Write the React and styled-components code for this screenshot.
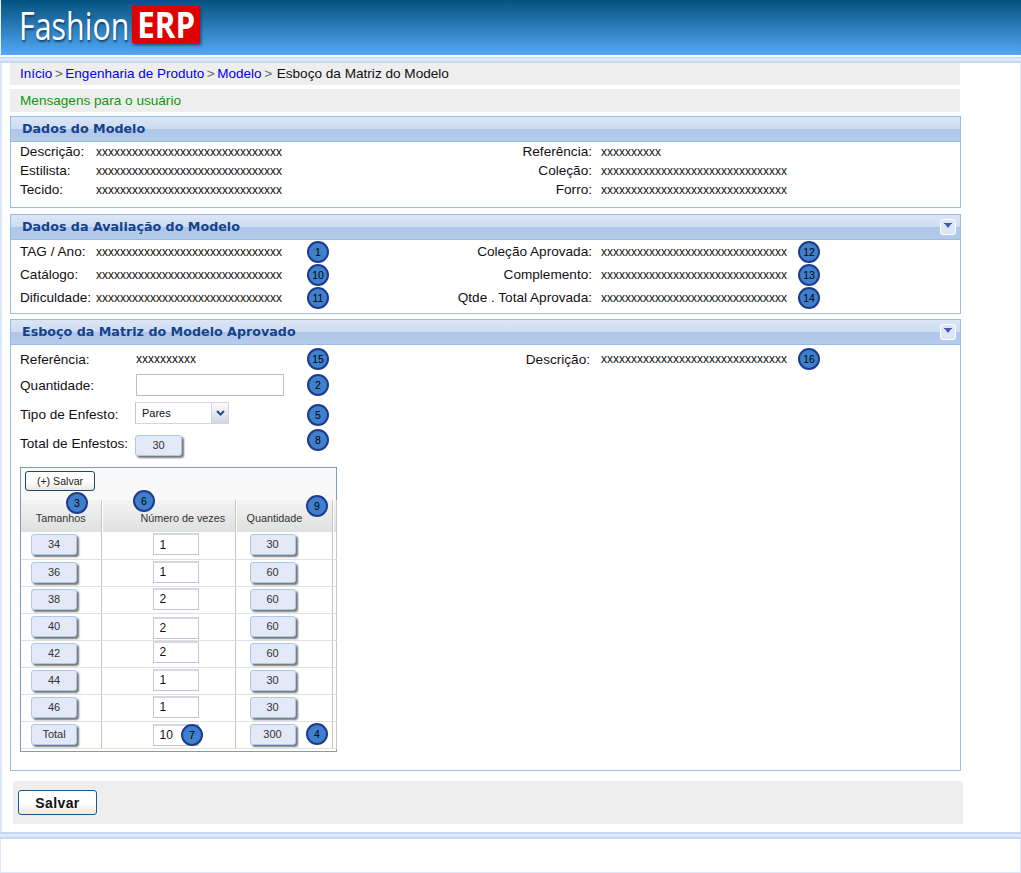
import React from 'react';
import styled, { createGlobalStyle } from 'styled-components';

const Global = createGlobalStyle`
  html, body { margin: 0; padding: 0; background: #fff; }
  body { font-family: "Liberation Sans", Arial, sans-serif; font-size: 13.6px; color: #111; }
`;

const Page = styled.div`
  width: 1021px;
  height: 873px;
  overflow: hidden;
  display: flex;
  flex-direction: column;
`;

const Header = styled.header`
  height: 55px;
  flex: none;
  box-sizing: border-box;
  padding: 6px 0 0 18px;
  display: flex;
  align-items: flex-start;
  gap: 4px;
  background: linear-gradient(#04527f, #52a8f5);
  border-left: 1px solid #e8f1fb;
`;

const LogoName = styled.span`
  display: block;
  width: 109px;
  font-family: "Open Sans", sans-serif;
  font-size: 38px;
  line-height: 38px;
  color: #fff;
  text-shadow: 1px 2px 2px #16456f;
  transform: scaleX(.8);
  transform-origin: left top;
`;

const LogoBox = styled.span`
  display: flex;
  justify-content: center;
  width: 68px;
  height: 37px;
  background: #e00000;
  box-shadow: 1px 2px 3px #16456f;
`;

const LogoMark = styled.span`
  display: block;
  color: #fff;
  font-family: "Open Sans", sans-serif;
  font-weight: 700;
  font-size: 36px;
  line-height: 37px;
  transform: scaleX(.87);
`;

const TopBand = styled.div`
  height: 3px;
  margin-top: 2px;
  flex: none;
  background: #dfe8f8;
  border-top: 1px solid #c6d7f1;
  border-bottom: 2px solid #c6d7f1;
`;

const Body = styled.main`
  flex: 1;
  box-sizing: border-box;
  border-left: 2px solid #dce7f8;
  border-right: 1px solid #dce7f8;
  padding: 0 0 0 8px;
  display: flex;
  flex-direction: column;
`;

const GreyBar = styled.div`
  width: 950px;
  box-sizing: border-box;
  background: #eeeeee;
  height: ${p => p.$h}px;
  line-height: ${p => p.$h}px;
  padding-left: 10px;
  margin-bottom: 4px;
  color: ${p => p.$color || '#111'};
`;

const Crumbs = styled(GreyBar)`
  font-size: 13.5px;
`;

const Crumb = styled.a`
  color: #0000ee;
`;

const Sep = styled.span`
  color: #666;
  margin: 0 2.6px;
`;

const CurrentCrumb = styled.span`
  font-size: 13.6px;
  margin-left: 2px;
`;

const Panel = styled.section`
  width: 951px;
  box-sizing: border-box;
  border: 1px solid #99bbe8;
  margin-bottom: ${p => p.$mb}px;
  height: ${p => p.$h}px;
`;

const PanelHead = styled.div`
  height: 25px;
  box-sizing: border-box;
  border-bottom: 1px solid #99bbe8;
  background: linear-gradient(#dbe6f5 0, #cddcf1 49%, #aec6e9 52%, #b5cbea 100%);
  display: flex;
  align-items: center;
  justify-content: space-between;
  padding: 0 4px 1px 11px;
`;

const PanelTitle = styled.h2`
  margin: 0 0 1px;
  font-family: "DejaVu Sans", sans-serif;
  font-size: 12.7px;
  font-weight: 700;
  color: #15428b;
`;

const Collapse = styled.span`
  width: 14px;
  height: 14px;
  border: 1px solid #fff;
  border-radius: 3px;
  background: #dce6f8;
  display: flex;
  align-items: center;
  justify-content: center;
`;

const Fields = styled.div`
  display: grid;
  grid-template-columns: ${p => p.$first}px ${p => 287 - p.$first}px 22px 272px 197px 22px;
  padding: ${p => p.$pt}px 0 0 9px;
  grid-auto-rows: ${p => p.$row}px;
  align-items: center;
`;

const Label = styled.span`
  white-space: nowrap;
  padding-top: ${p => p.$pt || 0}px;
`;

const RightLabel = styled(Label)`
  text-align: right;
  padding-right: ${p => p.$pr || 9}px;
`;

const Mock = styled.span`
  font-size: 12px;
  white-space: nowrap;
`;

const Badge = styled.span`
  width: 22px;
  height: 22px;
  box-sizing: border-box;
  margin-top: ${p => p.$mt || 0}px;
  border: 2px solid #1f3a8c;
  border-radius: 50%;
  background: #3f80cc;
  color: #000;
  font-size: 10.5px;
  line-height: 18px;
  text-align: center;
  display: block;
`;

const FloatBadge = styled(Badge)`
  position: absolute;
  left: ${p => p.$x}px;
  top: ${p => p.$y}px;
`;

const FormStack = styled.div`
  padding-left: 9px;
`;

const FormRow = styled.div`
  display: grid;
  grid-template-columns: 116px 171px 22px;
  align-items: ${p => p.$align || 'center'};
  height: ${p => p.$h}px;
`;

const TextInput = styled.input`
  width: 148px;
  height: 22px;
  box-sizing: border-box;
  border: 1px solid #b9bdd4;
  background: #fff;
  padding: 0;
`;

const Select = styled.div`
  width: 94px;
  height: 22px;
  box-sizing: border-box;
  margin-left: -1px;
  border: 1px solid #d4d6e4;
  border-left-color: #c2c4d6;
  display: flex;
  justify-content: space-between;
  align-items: stretch;
  font-size: 11px;
  padding-left: 6px;
  line-height: 20px;
`;

const SelectArrow = styled.span`
  width: 16px;
  background: linear-gradient(#fbfcfe, #d3d6e2);
  border-left: 1px solid #d0d2de;
  display: flex;
  align-items: center;
  justify-content: center;
`;

const ValueBtn = styled.span`
  display: block;
  width: ${p => p.$w || 46}px;
  height: 21px;
  box-sizing: border-box;
  margin: ${p => p.$mt || 0}px 0 0 ${p => p.$ml || 0}px;
  border: 1px solid #a9c8f0;
  border-radius: 3px;
  background: #e3e9f7;
  box-shadow: 2px 2px 2px #777;
  font-size: 11px;
  line-height: 19px;
  text-align: center;
  color: #333;
`;

const TableBox = styled.div`
  position: relative;
  width: 317px;
  height: 285px;
  box-sizing: border-box;
  border: 1px solid #7f9db9;
  margin: 16px 0 0 9px;
  background: #fff;
`;

const TableBar = styled.div`
  height: 32px;
  box-sizing: border-box;
  padding: 3px 0 0 4px;
  background: #f9f9f9;
`;

const SmallButton = styled.button`
  display: block;
  width: 70px;
  height: 20px;
  padding: 0;
  box-sizing: border-box;
  border: 1px solid #1c4a6e;
  border-radius: 3px;
  background: linear-gradient(#fff 50%, #ebe8e0);
  font: 10.6px "Liberation Sans", sans-serif;
  color: #222;
`;

const Matrix = styled.table`
  border-collapse: collapse;
  table-layout: fixed;
  width: 315px;
`;

const Th = styled.th`
  height: 32px;
  padding: 4px 0 0 ${p => p.$pl || 0}px;
  box-sizing: border-box;
  background: linear-gradient(#f4f4f4, #dedfdf);
  border-right: 1px solid #c8c8ba;
  font-size: 10.8px;
  font-weight: 400;
  white-space: nowrap;
  text-align: ${p => p.$align || 'center'};
  color: #333;

  & + & {
    box-shadow: inset 1px 0 0 #fff;
  }
`;

const Td = styled.td`
  height: 27px;
  box-sizing: border-box;
  padding: ${p => p.$pt || 0}px 0 0 ${p => p.$pl || 0}px;
  border-right: 1px solid #c8c8ba;
  border-bottom: 1px solid #e0e0e0;
  vertical-align: top;
`;

const CountInput = styled.input`
  display: block;
  width: 46px;
  height: 22px;
  box-sizing: border-box;
  border: 1px solid #c3c6da;
  border-top: 2px solid #d5d6e6;
  padding: 0 0 0 6px;
  font: 12px "Liberation Sans", sans-serif;
  color: #111;
  position: relative;
  top: ${p => p.$shift || 0}px;
`;

const Footer = styled.div`
  width: 950px;
  height: 43px;
  box-sizing: border-box;
  margin: 10px 0 0 3px;
  padding: 9px 0 0 5px;
  background: #eeeeee;
`;

const SaveButton = styled.button`
  display: block;
  width: 79px;
  height: 25px;
  padding: 0;
  box-sizing: border-box;
  border: 1px solid #1b5a8e;
  border-radius: 3px;
  background: linear-gradient(#fff 50%, #ebe8e0);
  font: 700 14px "Liberation Sans", sans-serif;
  letter-spacing: .4px;
  color: #111;
`;

const BottomBand = styled.div`
  height: 7px;
  flex: none;
  box-sizing: border-box;
  background: #dfe8f8;
  border-top: 2px solid #c6d7f1;
  border-bottom: 2px solid #c6d7f1;
`;

const BottomBar = styled.div`
  height: 34px;
  flex: none;
  box-sizing: border-box;
  border: 1px solid #dce7f8;
  border-top: 0;
`;

const x31 = 'x'.repeat(31);
const x10 = 'x'.repeat(10);

const CollapseIcon = () => (
  <svg width="10" height="7" viewBox="0 0 10 7"><path d="M1 0h8v1H8L5 5 2 1H1z" fill="#3f57b8" /></svg>
);

const ChevronIcon = () => (
  <svg width="9" height="6" viewBox="0 0 9 6"><path d="M1 1l3.5 3.5L8 1" fill="none" stroke="#1f4f8a" strokeWidth="2" /></svg>
);

const SIZES = [
  ['34', '1', '30'], ['36', '1', '60'], ['38', '2', '60'], ['40', '2', '60', 2],
  ['42', '2', '60', -1], ['44', '1', '30'], ['46', '1', '30'], ['Total', '10', '300', 1],
];

export default function App() {
  return (
    <Page>
      <Global />
      <Header>
        <LogoName>Fashion</LogoName>
        <LogoBox><LogoMark>ERP</LogoMark></LogoBox>
      </Header>
      <TopBand />
      <Body>
        <Crumbs $h={22}>
          <Crumb>Início</Crumb><Sep>&gt;</Sep><Crumb>Engenharia de Produto</Crumb><Sep>&gt;</Sep><Crumb>Modelo</Crumb><Sep>&gt;</Sep><CurrentCrumb>Esboço da Matriz do Modelo</CurrentCrumb>
        </Crumbs>
        <GreyBar $h={23} $color="#0a9a0a">Mensagens para o usuário</GreyBar>
        <Panel $h={92} $mb={6}>
          <PanelHead><PanelTitle>Dados do Modelo</PanelTitle></PanelHead>
          <Fields $first={76} $pt={0} $row={19}>
            <Label>Descrição:</Label><Mock>{x31}</Mock><span /><RightLabel>Referência:</RightLabel><Mock>{x10}</Mock><span />
            <Label>Estilista:</Label><Mock>{x31}</Mock><span /><RightLabel>Coleção:</RightLabel><Mock>{x31}</Mock><span />
            <Label>Tecido:</Label><Mock>{x31}</Mock><span /><RightLabel>Forro:</RightLabel><Mock>{x31}</Mock><span />
          </Fields>
        </Panel>
        <Panel $h={100} $mb={5}>
          <PanelHead>
            <PanelTitle>Dados da Avaliação do Modelo</PanelTitle>
            <Collapse><CollapseIcon /></Collapse>
          </PanelHead>
          <Fields $first={76} $pt={0} $row={23}>
            <Label>TAG / Ano:</Label><Mock>{x31}</Mock><Badge>1</Badge><RightLabel>Coleção Aprovada:</RightLabel><Mock>{x31}</Mock><Badge>12</Badge>
            <Label>Catálogo:</Label><Mock>{x31}</Mock><Badge>10</Badge><RightLabel>Complemento:</RightLabel><Mock>{x31}</Mock><Badge>13</Badge>
            <Label>Dificuldade:</Label><Mock>{x31}</Mock><Badge>11</Badge><RightLabel>Qtde . Total Aprovada:</RightLabel><Mock>{x31}</Mock><Badge>14</Badge>
          </Fields>
        </Panel>
        <Panel $h={452} $mb={0}>
          <PanelHead>
            <PanelTitle>Esboço da Matriz do Modelo Aprovado</PanelTitle>
            <Collapse><CollapseIcon /></Collapse>
          </PanelHead>
          <Fields $first={116} $pt={2} $row={24}>
            <Label>Referência:</Label><Mock>{x10}</Mock><Badge>15</Badge><RightLabel $pr={11}>Descrição:</RightLabel><Mock>{x31}</Mock><Badge>16</Badge>
          </Fields>
          <FormStack>
            <FormRow $h={28}><Label>Quantidade:</Label><TextInput /><Badge>2</Badge></FormRow>
            <FormRow $h={28}>
              <Label $pt={2}>Tipo de Enfesto:</Label>
              <Select>Pares<SelectArrow><ChevronIcon /></SelectArrow></Select>
              <Badge $mt={4}>5</Badge>
            </FormRow>
            <FormRow $h={24} $align="start">
              <Label $pt={9}>Total de Enfestos:</Label>
              <ValueBtn $w={47} $mt={8} $ml={-1}>30</ValueBtn>
              <Badge $mt={2}>8</Badge>
            </FormRow>
          </FormStack>
          <TableBox>
            <TableBar><SmallButton>(+) Salvar</SmallButton></TableBar>
            <Matrix>
              <colgroup><col width="80" /><col width="134" /><col width="97" /><col width="4" /></colgroup>
              <thead>
                <tr>
                  <Th>Tamanhos</Th>
                  <Th $align="left" $pl={39}>Número de vezes</Th>
                  <Th $align="left" $pl={11}>Quantidade</Th>
                  <Th />
                </tr>
              </thead>
              <tbody>
                {SIZES.map(([size, times, qty, shift]) => (
                  <tr key={size}>
                    <Td $pl={10} $pt={2}><ValueBtn>{size}</ValueBtn></Td>
                    <Td $pl={51} $pt={1}><CountInput defaultValue={times} $shift={shift} /></Td>
                    <Td $pl={14} $pt={2}><ValueBtn>{qty}</ValueBtn></Td>
                    <Td />
                  </tr>
                ))}
              </tbody>
            </Matrix>
            <FloatBadge $x={45} $y={24}>3</FloatBadge>
            <FloatBadge $x={112} $y={22}>6</FloatBadge>
            <FloatBadge $x={285} $y={27}>9</FloatBadge>
            <FloatBadge $x={160} $y={256}>7</FloatBadge>
            <FloatBadge $x={285} $y={255}>4</FloatBadge>
          </TableBox>
        </Panel>
        <Footer><SaveButton>Salvar</SaveButton></Footer>
      </Body>
      <BottomBand />
      <BottomBar />
    </Page>
  );
}
